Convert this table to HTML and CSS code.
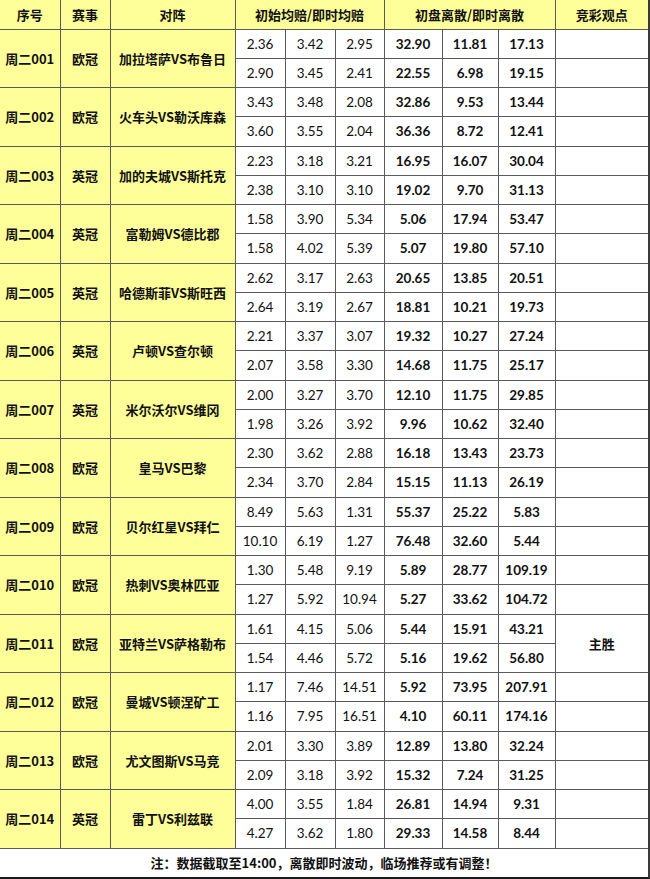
FILE: index.html
```html
<!DOCTYPE html>
<html lang="zh-CN">
<head>
<meta charset="utf-8">
<title>竞彩赔率离散</title>
<link rel="stylesheet" href="styles.css">
</head>
<body>
<div class="sheet">
<table class="odds">
<colgroup>
<col class="c-no"><col class="c-lg"><col class="c-vs">
<col class="c-o1"><col class="c-o2"><col class="c-o3">
<col class="c-d1"><col class="c-d2"><col class="c-d3">
<col class="c-op">
</colgroup>
<thead>
<tr class="head">
<th>序号</th><th>赛事</th><th>对阵</th><th colspan="3">初始均赔/即时均赔</th><th colspan="3">初盘离散/即时离散</th><th>竞彩观点</th>
</tr>
</thead>
<tbody>
<tr class="r"><td rowspan="2" class="y">周二001</td><td rowspan="2" class="y">欧冠</td><td rowspan="2" class="y">加拉塔萨VS布鲁日</td><td class="n">2.36</td><td class="n">3.42</td><td class="n">2.95</td><td class="b">32.90</td><td class="b">11.81</td><td class="b">17.13</td><td></td></tr>
<tr class="r"><td class="n">2.90</td><td class="n">3.45</td><td class="n">2.41</td><td class="b">22.55</td><td class="b">6.98</td><td class="b">19.15</td><td></td></tr>

<tr class="r"><td rowspan="2" class="y">周二002</td><td rowspan="2" class="y">欧冠</td><td rowspan="2" class="y">火车头VS勒沃库森</td><td class="n">3.43</td><td class="n">3.48</td><td class="n">2.08</td><td class="b">32.86</td><td class="b">9.53</td><td class="b">13.44</td><td></td></tr>
<tr class="r"><td class="n">3.60</td><td class="n">3.55</td><td class="n">2.04</td><td class="b">36.36</td><td class="b">8.72</td><td class="b">12.41</td><td></td></tr>

<tr class="r"><td rowspan="2" class="y">周二003</td><td rowspan="2" class="y">英冠</td><td rowspan="2" class="y">加的夫城VS斯托克</td><td class="n">2.23</td><td class="n">3.18</td><td class="n">3.21</td><td class="b">16.95</td><td class="b">16.07</td><td class="b">30.04</td><td></td></tr>
<tr class="r"><td class="n">2.38</td><td class="n">3.10</td><td class="n">3.10</td><td class="b">19.02</td><td class="b">9.70</td><td class="b">31.13</td><td></td></tr>

<tr class="r"><td rowspan="2" class="y">周二004</td><td rowspan="2" class="y">英冠</td><td rowspan="2" class="y">富勒姆VS德比郡</td><td class="n">1.58</td><td class="n">3.90</td><td class="n">5.34</td><td class="b">5.06</td><td class="b">17.94</td><td class="b">53.47</td><td></td></tr>
<tr class="r"><td class="n">1.58</td><td class="n">4.02</td><td class="n">5.39</td><td class="b">5.07</td><td class="b">19.80</td><td class="b">57.10</td><td></td></tr>

<tr class="r"><td rowspan="2" class="y">周二005</td><td rowspan="2" class="y">英冠</td><td rowspan="2" class="y">哈德斯菲VS斯旺西</td><td class="n">2.62</td><td class="n">3.17</td><td class="n">2.63</td><td class="b">20.65</td><td class="b">13.85</td><td class="b">20.51</td><td></td></tr>
<tr class="r"><td class="n">2.64</td><td class="n">3.19</td><td class="n">2.67</td><td class="b">18.81</td><td class="b">10.21</td><td class="b">19.73</td><td></td></tr>

<tr class="r"><td rowspan="2" class="y">周二006</td><td rowspan="2" class="y">英冠</td><td rowspan="2" class="y">卢顿VS查尔顿</td><td class="n">2.21</td><td class="n">3.37</td><td class="n">3.07</td><td class="b">19.32</td><td class="b">10.27</td><td class="b">27.24</td><td></td></tr>
<tr class="r"><td class="n">2.07</td><td class="n">3.58</td><td class="n">3.30</td><td class="b">14.68</td><td class="b">11.75</td><td class="b">25.17</td><td></td></tr>

<tr class="r"><td rowspan="2" class="y">周二007</td><td rowspan="2" class="y">英冠</td><td rowspan="2" class="y">米尔沃尔VS维冈</td><td class="n">2.00</td><td class="n">3.27</td><td class="n">3.70</td><td class="b">12.10</td><td class="b">11.75</td><td class="b">29.85</td><td></td></tr>
<tr class="r"><td class="n">1.98</td><td class="n">3.26</td><td class="n">3.92</td><td class="b">9.96</td><td class="b">10.62</td><td class="b">32.40</td><td></td></tr>

<tr class="r"><td rowspan="2" class="y">周二008</td><td rowspan="2" class="y">欧冠</td><td rowspan="2" class="y">皇马VS巴黎</td><td class="n">2.30</td><td class="n">3.62</td><td class="n">2.88</td><td class="b">16.18</td><td class="b">13.43</td><td class="b">23.73</td><td></td></tr>
<tr class="r"><td class="n">2.34</td><td class="n">3.70</td><td class="n">2.84</td><td class="b">15.15</td><td class="b">11.13</td><td class="b">26.19</td><td></td></tr>

<tr class="r"><td rowspan="2" class="y">周二009</td><td rowspan="2" class="y">欧冠</td><td rowspan="2" class="y">贝尔红星VS拜仁</td><td class="n">8.49</td><td class="n">5.63</td><td class="n">1.31</td><td class="b">55.37</td><td class="b">25.22</td><td class="b">5.83</td><td></td></tr>
<tr class="r"><td class="n">10.10</td><td class="n">6.19</td><td class="n">1.27</td><td class="b">76.48</td><td class="b">32.60</td><td class="b">5.44</td><td></td></tr>

<tr class="r"><td rowspan="2" class="y">周二010</td><td rowspan="2" class="y">欧冠</td><td rowspan="2" class="y">热刺VS奥林匹亚</td><td class="n">1.30</td><td class="n">5.48</td><td class="n">9.19</td><td class="b">5.89</td><td class="b">28.77</td><td class="b">109.19</td><td></td></tr>
<tr class="r"><td class="n">1.27</td><td class="n">5.92</td><td class="n">10.94</td><td class="b">5.27</td><td class="b">33.62</td><td class="b">104.72</td><td></td></tr>

<tr class="r"><td rowspan="2" class="y">周二011</td><td rowspan="2" class="y">欧冠</td><td rowspan="2" class="y">亚特兰VS萨格勒布</td><td class="n">1.61</td><td class="n">4.15</td><td class="n">5.06</td><td class="b">5.44</td><td class="b">15.91</td><td class="b">43.21</td><td rowspan="2" class="op">主胜</td></tr>
<tr class="r"><td class="n">1.54</td><td class="n">4.46</td><td class="n">5.72</td><td class="b">5.16</td><td class="b">19.62</td><td class="b">56.80</td></tr>

<tr class="r"><td rowspan="2" class="y">周二012</td><td rowspan="2" class="y">欧冠</td><td rowspan="2" class="y">曼城VS顿涅矿工</td><td class="n">1.17</td><td class="n">7.46</td><td class="n">14.51</td><td class="b">5.92</td><td class="b">73.95</td><td class="b">207.91</td><td></td></tr>
<tr class="r"><td class="n">1.16</td><td class="n">7.95</td><td class="n">16.51</td><td class="b">4.10</td><td class="b">60.11</td><td class="b">174.16</td><td></td></tr>

<tr class="r"><td rowspan="2" class="y">周二013</td><td rowspan="2" class="y">欧冠</td><td rowspan="2" class="y">尤文图斯VS马竞</td><td class="n">2.01</td><td class="n">3.30</td><td class="n">3.89</td><td class="b">12.89</td><td class="b">13.80</td><td class="b">32.24</td><td></td></tr>
<tr class="r"><td class="n">2.09</td><td class="n">3.18</td><td class="n">3.92</td><td class="b">15.32</td><td class="b">7.24</td><td class="b">31.25</td><td></td></tr>

<tr class="r"><td rowspan="2" class="y">周二014</td><td rowspan="2" class="y">英冠</td><td rowspan="2" class="y">雷丁VS利兹联</td><td class="n">4.00</td><td class="n">3.55</td><td class="n">1.84</td><td class="b">26.81</td><td class="b">14.94</td><td class="b">9.31</td><td></td></tr>
<tr class="r"><td class="n">4.27</td><td class="n">3.62</td><td class="n">1.80</td><td class="b">29.33</td><td class="b">14.58</td><td class="b">8.44</td><td></td></tr>
</tbody>
<tfoot>
<tr class="foot"><td colspan="10">注：数据截取至14:00，离散即时波动，临场推荐或有调整！</td></tr>
</tfoot>
</table>
</div>
</body>
</html>
```

FILE: styles.css
```css
html, body {
  margin: 0;
  padding: 0;
  background: #ffffff;
}

body {
  font-family: "Lato", "Noto Sans CJK SC", sans-serif;
  color: #111111;
}

.sheet {
  width: 648px;
  border-right: 2px solid #3a3a3a;
  border-bottom: 2px solid #1a1a1a;
}

.odds {
  width: 648px;
  table-layout: fixed;
  border-collapse: collapse;
  border-style: hidden;
}

.c-no { width: 60px; }
.c-lg { width: 50px; }
.c-vs { width: 125px; }
.c-o1 { width: 50px; }
.c-o2 { width: 50px; }
.c-o3 { width: 49px; }
.c-d1 { width: 58px; }
.c-d2 { width: 56px; }
.c-d3 { width: 57px; }
.c-op { width: 93px; }

.odds th,
.odds td {
  border: 1px solid #5a5a5a;
  padding: 0;
  text-align: center;
  vertical-align: middle;
  white-space: nowrap;
  overflow: hidden;
}

.head {
  height: 29px;
}

.head th {
  background: #ffff99;
  font-family: "Noto Sans CJK SC", sans-serif;
  font-weight: 700;
  font-size: 13px;
}

.r {
  height: 29.25px;
}

.y {
  background: #ffff99;
  font-family: "Noto Sans CJK SC", sans-serif;
  font-weight: 700;
  font-size: 13px;
}

.n {
  font-size: 13.5px;
  font-weight: 400;
}

.b {
  font-size: 13.5px;
  font-weight: 700;
}

.op {
  font-family: "Noto Sans CJK SC", sans-serif;
  font-weight: 700;
  font-size: 13px;
}

.foot {
  height: 29px;
}

.foot td {
  font-family: "Noto Sans CJK SC", sans-serif;
  font-weight: 700;
  font-size: 13px;
  background: #ffffff;
}
```
